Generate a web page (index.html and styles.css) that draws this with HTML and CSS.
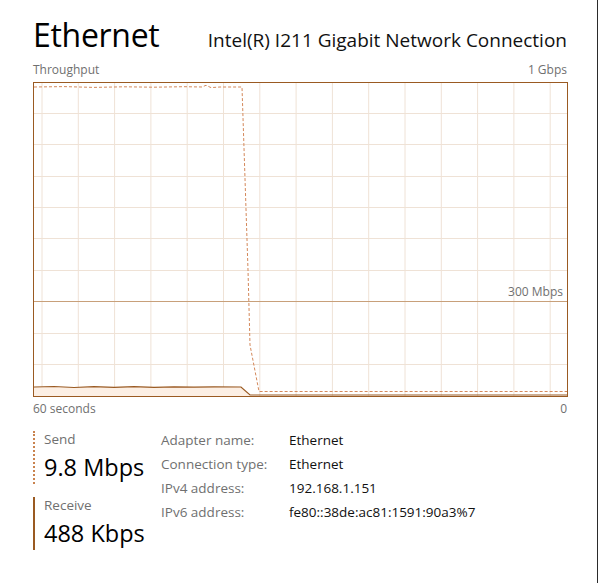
FILE: index.html
```html
<!DOCTYPE html>
<html lang="en">
<head>
    <meta charset="UTF-8">
    <meta name="viewport" content="width=device-width, initial-scale=1.0">
    <title>Ethernet</title>
    <link rel="stylesheet" href="styles.css">
</head>
<body>

<div class="window">
    <div class="panel">
        <div class="panel-header">
            <h1 class="panel-title">Ethernet</h1>
            <div class="panel-subtitle">Intel(R) I211 Gigabit Network Connection</div>
        </div>

        <div class="chart-labels chart-top">
            <span>Throughput</span>
            <span>1 Gbps</span>
        </div>

        <div class="chart">
            <svg class="chart-svg" width="533" height="313" viewBox="0 0 533 313">
                <g class="grid">
                    <line x1="8" y1="0" x2="8" y2="313"/>
                    <line x1="44.3" y1="0" x2="44.3" y2="313"/>
                    <line x1="80.6" y1="0" x2="80.6" y2="313"/>
                    <line x1="116.9" y1="0" x2="116.9" y2="313"/>
                    <line x1="153.2" y1="0" x2="153.2" y2="313"/>
                    <line x1="189.5" y1="0" x2="189.5" y2="313"/>
                    <line x1="225.8" y1="0" x2="225.8" y2="313"/>
                    <line x1="262.1" y1="0" x2="262.1" y2="313"/>
                    <line x1="298.4" y1="0" x2="298.4" y2="313"/>
                    <line x1="334.7" y1="0" x2="334.7" y2="313"/>
                    <line x1="371" y1="0" x2="371" y2="313"/>
                    <line x1="407.3" y1="0" x2="407.3" y2="313"/>
                    <line x1="443.6" y1="0" x2="443.6" y2="313"/>
                    <line x1="479.9" y1="0" x2="479.9" y2="313"/>
                    <line x1="516.2" y1="0" x2="516.2" y2="313"/>

                    <line x1="0" y1="30.5" x2="533" y2="30.5"/>
                    <line x1="0" y1="61.5" x2="533" y2="61.5"/>
                    <line x1="0" y1="93.5" x2="533" y2="93.5"/>
                    <line x1="0" y1="124.5" x2="533" y2="124.5"/>
                    <line x1="0" y1="155.5" x2="533" y2="155.5"/>
                    <line x1="0" y1="187.5" x2="533" y2="187.5"/>
                    <line x1="0" y1="250.5" x2="533" y2="250.5"/>
                    <line x1="0" y1="281.5" x2="533" y2="281.5"/>
                </g>
                <line class="scale-line" x1="0" y1="218.5" x2="533" y2="218.5"/>

                <!-- receive -->
                <path class="receive-fill" d="M0 304 L20 303.5 L40 304.5 L60 303.6 L80 304.4 L100 303.7 L120 304.3 L140 303.8 L160 304.2 L180 303.9 L207 304 L216 313 L0 313 Z"/>
                <path class="receive-line" d="M0 304 L20 303.5 L40 304.5 L60 303.6 L80 304.4 L100 303.7 L120 304.3 L140 303.8 L160 304.2 L180 303.9 L207 304 L216 312 L533 312"/>

                <!-- send -->
                <path class="send-line" d="M0 4 L30 3.6 L60 4.4 L90 3.8 L120 4.2 L150 3.7 L168 4 L172 2.3 L177 4.6 L186 4 L208 4 L214 187 L216 262 L225 308.5 L533 308.5"/>
            </svg>
            <span class="scale-label">300 Mbps</span>
        </div>

        <div class="chart-labels chart-axis">
            <span>60 seconds</span>
            <span>0</span>
        </div>

        <div class="details">
            <div class="rates">
                <div class="rate rate-send">
                    <div class="rate-label">Send</div>
                    <div class="rate-value">9.8 Mbps</div>
                </div>
                <div class="rate rate-receive">
                    <div class="rate-label">Receive</div>
                    <div class="rate-value">488 Kbps</div>
                </div>
            </div>
            <div class="props">
                <span class="prop-name">Adapter name:</span>
                <span class="prop-value">Ethernet</span>
                <span class="prop-name">Connection type:</span>
                <span class="prop-value">Ethernet</span>
                <span class="prop-name">IPv4 address:</span>
                <span class="prop-value">192.168.1.151</span>
                <span class="prop-name">IPv6 address:</span>
                <span class="prop-value">fe80::38de:ac81:1591:90a3%7</span>
            </div>
        </div>
    </div>
</div>

</body>
</html>
```

FILE: styles.css
```css
body {
    font-family: 'Open Sans', 'Noto Sans', sans-serif;
    margin: 0;
    padding: 0;
    background-color: white;
    color: #000;
}

.window {
    width: 597px;
    min-height: 100vh;
    border-right: 1px solid #2b2b2b;
}

.panel {
    width: 534px;
    padding-left: 33px;
    padding-top: 15px;
}

.panel-header {
    display: flex;
    justify-content: space-between;
    align-items: baseline;
    height: 46px;
}

.panel-title {
    margin: 0;
    font-size: 32px;
    font-weight: 400;
    line-height: 40px;
    letter-spacing: -0.3px;
}

.panel-subtitle {
    font-size: 19px;
    line-height: 24px;
    color: #111;
}

.chart-labels {
    display: flex;
    justify-content: space-between;
    font-size: 12px;
    line-height: 18px;
    color: #707070;
}

.chart-top {
    margin-bottom: 3px;
}

.chart {
    position: relative;
    width: 533px;
    height: 313px;
    border: 1px solid #9a5a22;
}

.chart-svg {
    display: block;
}

.grid line {
    stroke: #efe2d6;
    stroke-width: 1;
}

.scale-line {
    stroke: #c8a07a;
    stroke-width: 1;
}

.scale-label {
    position: absolute;
    right: 4px;
    top: 201px;
    font-size: 12px;
    line-height: 16px;
    color: #707070;
}

.receive-fill {
    fill: #fcefe4;
}

.receive-line {
    fill: none;
    stroke: #9a5a22;
    stroke-width: 1.2;
}

.send-line {
    fill: none;
    stroke: #d4885a;
    stroke-width: 1;
    stroke-dasharray: 3 2;
}

.chart-axis {
    margin-top: 3px;
}

.details {
    display: flex;
    margin-top: 13px;
}

.rates {
    width: 128px;
    display: flex;
    flex-direction: column;
    gap: 13px;
}

.rate {
    padding-left: 9px;
    border-left: 2px solid #9a5a22;
}

.rate-send {
    border-left: 2px dotted #c9834f;
}

.rate-label {
    font-size: 13.5px;
    line-height: 16px;
    color: #707070;
}

.rate-value {
    margin-top: 3px;
    font-size: 23.5px;
    line-height: 34px;
}

.props {
    display: grid;
    grid-template-columns: 128px auto;
    grid-auto-rows: 24px;
    font-size: 13.5px;
    line-height: 18px;
    align-content: start;
}

.prop-name {
    color: #707070;
}

.prop-value {
    color: #111;
}
```
